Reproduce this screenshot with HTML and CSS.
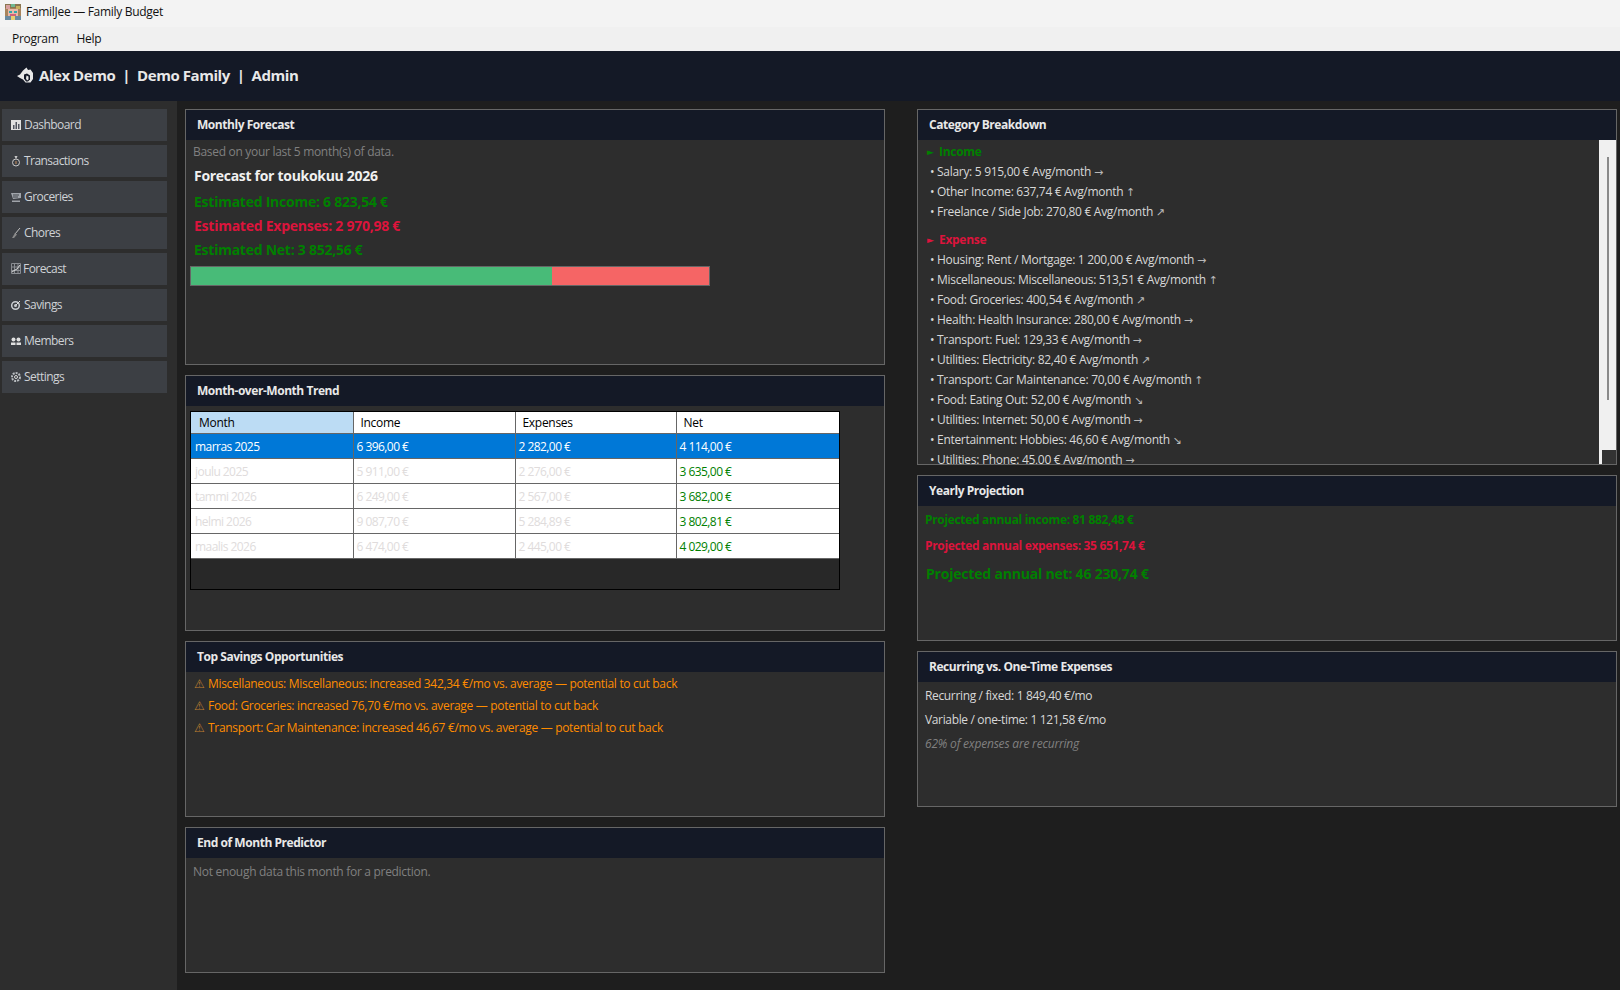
FILE: index.html
```html
<!DOCTYPE html>
<html>
<head>
    <title>FamilJee — Family Budget</title>
    <link rel="stylesheet" href="styles.css">
</head>
<body>
    <div class="titlebar">
        <svg class="app-icon" width="16" height="16" viewBox="0 0 16 16">
            <rect width="16" height="16" fill="#a8845c"/>
            <rect width="16" height="4" fill="#8a7650"/>
            <rect x="1" y="1" width="4" height="4" fill="#d8a0a0"/>
            <rect x="6" y="0" width="4" height="3" fill="#70b890"/>
            <rect x="11" y="2" width="4" height="3" fill="#c8b060"/>
            <rect x="3" y="5" width="10" height="7" fill="#e8b8a8"/>
            <rect x="4" y="7" width="3" height="2" fill="#30a8a8"/>
            <rect x="9" y="7" width="3" height="2" fill="#30a8a8"/>
            <rect x="5" y="10" width="6" height="2" fill="#d0607a"/>
            <rect x="0" y="12" width="16" height="4" fill="#6a8aa0"/>
            <rect x="6" y="12" width="4" height="4" fill="#e8d070"/>
        </svg>
        <span>FamilJee — Family Budget</span>
    </div>
    <div class="menubar">
        <span>Program</span>
        <span>Help</span>
    </div>
    <div class="userbar">
        <svg width="18" height="17" viewBox="0 0 18 17">
            <path d="M1 9l3-1.500 3-4 3.500-3 1.500 2.500 2.500-.5 2.500 3.500v6l-2.500 3.500h-5l-2.500-3-3-1.500z" fill="#e8e8e8"/>
            <path d="M8 7.500l3-1 3 2v4l-2 2h-2l-2-3z" fill="#141926"/>
            <path d="M10.500 8.500l2 1v3l-1.500 1-1-2z" fill="#e8e8e8"/>
        </svg>
        <b>Alex Demo</b><b class="sep">|</b><b>Demo Family</b><b class="sep">|</b><b>Admin</b>
    </div>

    <div class="app">
        <div class="sidebar">
            <div class="nav-btn">
                <svg width="11" height="12" viewBox="0 0 11 12"><rect x="0" y="1" width="10" height="10" fill="#e0e0e0"/><path d="M2 10V6h1.500v4zM4.500 10V3H6v7zM7 10V5h1.500v5z" fill="#505560"/></svg>
                Dashboard
            </div>
            <div class="nav-btn">
                <svg width="11" height="12" viewBox="0 0 11 12"><circle cx="5" cy="7.500" r="3.500" fill="none" stroke="#c8c8c8"/><path d="M3.500 1h3l-1 2.500h-1z" fill="#c8c8c8"/><path d="M5 6v3" stroke="#c89060"/></svg>
                Transactions
            </div>
            <div class="nav-btn">
                <svg width="11" height="12" viewBox="0 0 11 12"><path d="M0 2h10v5l-8 1z" fill="#a0a4aa"/><path d="M2 4h6M2 6h5" stroke="#40444a"/><path d="M1 9.500h8v1.500H1z" fill="#a0a4aa"/></svg>
                Groceries
            </div>
            <div class="nav-btn">
                <svg width="11" height="12" viewBox="0 0 11 12"><path d="M9 1L4 7" stroke="#c0c0c0"/><path d="M4 6l2 1.500-3 3.500H1z" fill="#8a8a8a"/></svg>
                Chores
            </div>
            <div class="nav-btn nav-btn-tight">
                <svg width="11" height="12" viewBox="0 0 11 12"><path d="M.5.500h9v10h-9zM.5 4h9M.5 7.500h9M3.500.500v10M7 .500v10" fill="none" stroke="#8a8d92"/><path d="M1 9l3-2 2-1 3-4" fill="none" stroke="#d8d8d8"/></svg>
                Forecast
            </div>
            <div class="nav-btn">
                <svg width="11" height="12" viewBox="0 0 11 12"><circle cx="4.500" cy="6.500" r="3.800" fill="none" stroke="#c8ccd0" stroke-width="1.500"/><circle cx="4.500" cy="6.500" r="1.500" fill="#c8ccd0"/><path d="M5 6l4-4" stroke="#e0e0e0"/></svg>
                Savings
            </div>
            <div class="nav-btn">
                <svg width="11" height="12" viewBox="0 0 11 12"><circle cx="2.500" cy="4.500" r="2" fill="#e0e0e0"/><circle cx="7.500" cy="4.500" r="2" fill="#e0e0e0"/><path d="M0 10V7.500h4.500V10zM5.500 10V7.500H10V10z" fill="#e0e0e0"/></svg>
                Members
            </div>
            <div class="nav-btn">
                <svg width="11" height="12" viewBox="0 0 11 12"><circle cx="5" cy="6" r="4" fill="none" stroke="#b8bcc0" stroke-width="2" stroke-dasharray="2 1"/><circle cx="5" cy="6" r="1.500" fill="none" stroke="#d8d8d8"/></svg>
                Settings
            </div>
        </div>

        <div class="content">
            <div class="column">
                <div class="panel panel-forecast">
                    <div class="panel-title">Monthly Forecast</div>
                    <div class="panel-body">
                        <div class="muted based">Based on your last 5 month(s) of data.</div>
                        <div class="forecast-head">Forecast for toukokuu 2026</div>
                        <div class="big-line green">Estimated Income: 6 823,54 €</div>
                        <div class="big-line red">Estimated Expenses: 2 970,98 €</div>
                        <div class="big-line green">Estimated Net: 3 852,56 €</div>
                        <div class="split-bar">
                            <div class="split-in"></div>
                            <div class="split-out"></div>
                        </div>
                    </div>
                </div>

                <div class="panel panel-trend">
                    <div class="panel-title">Month-over-Month Trend</div>
                    <div class="table-wrap">
                        <table>
                            <thead>
                                <tr><th class="th-active">Month</th><th>Income</th><th>Expenses</th><th>Net</th></tr>
                            </thead>
                            <tbody>
                                <tr class="selected"><td>marras 2025</td><td>6 396,00 €</td><td>2 282,00 €</td><td>4 114,00 €</td></tr>
                                <tr><td>joulu 2025</td><td>5 911,00 €</td><td>2 276,00 €</td><td class="net">3 635,00 €</td></tr>
                                <tr><td>tammi 2026</td><td>6 249,00 €</td><td>2 567,00 €</td><td class="net">3 682,00 €</td></tr>
                                <tr><td>helmi 2026</td><td>9 087,70 €</td><td>5 284,89 €</td><td class="net">3 802,81 €</td></tr>
                                <tr><td>maalis 2026</td><td>6 474,00 €</td><td>2 445,00 €</td><td class="net">4 029,00 €</td></tr>
                            </tbody>
                        </table>
                    </div>
                </div>

                <div class="panel panel-savings">
                    <div class="panel-title">Top Savings Opportunities</div>
                    <div class="savings-list">
                        <div class="saving"><span class="warn">⚠</span>Miscellaneous: Miscellaneous: increased 342,34 €/mo vs. average — potential to cut back</div>
                        <div class="saving"><span class="warn">⚠</span>Food: Groceries: increased 76,70 €/mo vs. average — potential to cut back</div>
                        <div class="saving"><span class="warn">⚠</span>Transport: Car Maintenance: increased 46,67 €/mo vs. average — potential to cut back</div>
                    </div>
                </div>

                <div class="panel panel-predictor">
                    <div class="panel-title">End of Month Predictor</div>
                    <div class="muted predictor-text">Not enough data this month for a prediction.</div>
                </div>
            </div>

            <div class="column">
                <div class="panel panel-breakdown">
                    <div class="panel-title">Category Breakdown</div>
                    <div class="breakdown-body">
                        <div class="breakdown-list">
                            <div class="cat-head green"><span class="cat-arrow">►</span>Income</div>
                            <div class="cat-row">• Salary: 5 915,00 € Avg/month <span class="trend">→</span></div>
                            <div class="cat-row">• Other Income: 637,74 € Avg/month <span class="trend">↑</span></div>
                            <div class="cat-row">• Freelance / Side Job: 270,80 € Avg/month <span class="trend">↗</span></div>
                            <div class="cat-head red cat-head-gap"><span class="cat-arrow">►</span>Expense</div>
                            <div class="cat-row">• Housing: Rent / Mortgage: 1 200,00 € Avg/month <span class="trend">→</span></div>
                            <div class="cat-row">• Miscellaneous: Miscellaneous: 513,51 € Avg/month <span class="trend">↑</span></div>
                            <div class="cat-row">• Food: Groceries: 400,54 € Avg/month <span class="trend">↗</span></div>
                            <div class="cat-row">• Health: Health Insurance: 280,00 € Avg/month <span class="trend">→</span></div>
                            <div class="cat-row">• Transport: Fuel: 129,33 € Avg/month <span class="trend">→</span></div>
                            <div class="cat-row">• Utilities: Electricity: 82,40 € Avg/month <span class="trend">↗</span></div>
                            <div class="cat-row">• Transport: Car Maintenance: 70,00 € Avg/month <span class="trend">↑</span></div>
                            <div class="cat-row">• Food: Eating Out: 52,00 € Avg/month <span class="trend">↘</span></div>
                            <div class="cat-row">• Utilities: Internet: 50,00 € Avg/month <span class="trend">→</span></div>
                            <div class="cat-row">• Entertainment: Hobbies: 46,60 € Avg/month <span class="trend">↘</span></div>
                            <div class="cat-row">• Utilities: Phone: 45,00 € Avg/month <span class="trend">→</span></div>
                        </div>
                        <div class="scrollbar">
                            <div class="scroll-thumb"></div>
                            <div class="scroll-corner"></div>
                        </div>
                    </div>
                </div>

                <div class="panel panel-yearly">
                    <div class="panel-title">Yearly Projection</div>
                    <div class="yearly-body">
                        <div class="year-line green">Projected annual income: 81 882,48 €</div>
                        <div class="year-line red">Projected annual expenses: 35 651,74 €</div>
                        <div class="year-net green">Projected annual net: 46 230,74 €</div>
                    </div>
                </div>

                <div class="panel panel-recurring">
                    <div class="panel-title">Recurring vs. One-Time Expenses</div>
                    <div class="recurring-body">
                        <div class="rec-line">Recurring / fixed: 1 849,40 €/mo</div>
                        <div class="rec-line">Variable / one-time: 1 121,58 €/mo</div>
                        <div class="rec-line rec-note">62% of expenses are recurring</div>
                    </div>
                </div>
            </div>
        </div>
    </div>
</body>
</html>
```

FILE: styles.css
```css
:root {
    --bg: #1e1e1e;
    --panel: #2d2d2d;
    --head: #141926;
    --fg: #e0e0e0;
    --gray: #808080;
    --green: #008000;
    --red: #dc143c;
    --orange: #ff8c00;
    --line: #666666;
}

* {
    box-sizing: border-box;
}

html, body {
    height: 100%;
}

body {
    margin: 0;
    overflow: hidden;
    background: var(--bg);
    color: var(--fg);
    font-family: "Open Sans", "Noto Sans", sans-serif;
    font-size: 12px;
    letter-spacing: -0.3px;
}

.titlebar {
    display: flex;
    align-items: center;
    gap: 5px;
    height: 27px;
    padding: 0 0 4px 5px;
    background: #f3f3f3;
    color: #111111;
}

.menubar {
    display: flex;
    gap: 18px;
    align-items: center;
    height: 24px;
    padding: 0 0 1px 12px;
    background: #f0f0f0;
    color: #111111;
}

.userbar {
    display: flex;
    align-items: center;
    height: 50px;
    padding: 0 0 2px 16px;
    background: var(--head);
    color: #e8e8e8;
    font-size: 15px;
    letter-spacing: -0.45px;
}

.userbar svg {
    margin-right: 5px;
}

.sep {
    margin: 0 7px;
}

.app {
    display: flex;
    height: 889px;
}

.sidebar {
    display: flex;
    flex-direction: column;
    gap: 4px;
    width: 177px;
    padding: 8px 10px 0 2px;
    background: var(--panel);
}

.nav-btn {
    display: flex;
    align-items: center;
    gap: 2px;
    height: 32px;
    padding: 0 0 1px 9px;
    background: #3c3f44;
    color: #cfd2d6;
    letter-spacing: -0.55px;
}

.nav-btn-tight {
    gap: 1px;
}

.content {
    display: flex;
    gap: 32px;
    padding: 8px 3px 0 8px;
}

.column {
    display: flex;
    flex-direction: column;
    gap: 10px;
    width: 700px;
}

.panel {
    display: flex;
    flex-direction: column;
    border: 1px solid var(--line);
    background: var(--panel);
    flex-shrink: 0;
}

.panel-forecast { height: 256px; }
.panel-trend { height: 256px; }
.panel-savings { height: 176px; }
.panel-predictor { height: 146px; }
.panel-breakdown { height: 356px; }
.panel-yearly { height: 166px; }
.panel-recurring { height: 156px; }

.panel-title {
    height: 30px;
    line-height: 30px;
    padding-left: 11px;
    background: var(--head);
    color: #e8e8e8;
    font-weight: 700;
    letter-spacing: -0.45px;
    flex-shrink: 0;
}

.green { color: var(--green); }
.red { color: var(--red); }
.muted { color: var(--gray); }

.panel-body {
    padding: 1px 4px 0;
}

.based {
    height: 21px;
    line-height: 21px;
    padding-left: 3px;
}

.forecast-head {
    height: 28px;
    line-height: 28px;
    padding-left: 4px;
    font-size: 14px;
    font-weight: 700;
    color: #f0f0f0;
    letter-spacing: -0.3px;
}

.big-line {
    height: 24px;
    line-height: 24px;
    padding-left: 4px;
    font-size: 14px;
    font-weight: 700;
    letter-spacing: -0.25px;
}

.split-bar {
    display: flex;
    width: 520px;
    height: 20px;
    margin-top: 4px;
    border: 1px solid var(--line);
}

.split-in {
    width: 361px;
    background: #48bb78;
}

.split-out {
    flex: 1;
    background: #f56565;
}

.table-wrap {
    width: 650px;
    height: 179px;
    margin: 5px 0 0 4px;
    border: 1px solid #000000;
    background: #282828;
}

table {
    width: 648px;
    border-collapse: collapse;
    table-layout: fixed;
}

th, td {
    padding: 0;
    border-right: 1px solid var(--line);
    border-bottom: 1px solid var(--line);
    background: #ffffff;
    white-space: nowrap;
    overflow: hidden;
    font-weight: 400;
    text-align: left;
}

th {
    height: 21px;
    padding-left: 7px;
    color: #000000;
}

th:nth-child(1), td:nth-child(1) { width: 162px; }
th:nth-child(2), td:nth-child(2) { width: 162px; }
th:nth-child(3), td:nth-child(3) { width: 161px; }

th:last-child, td:last-child {
    border-right: none;
}

.th-active {
    background: #bcdcf4;
    padding-left: 8px;
}

td {
    height: 25px;
    padding: 2px 0 0 3px;
    color: #e0dcdc;
    letter-spacing: -0.55px;
}

td:first-child {
    padding-left: 4px;
}

td.net {
    color: var(--green);
}

.selected td {
    background: #0078d7;
    color: #ffffff;
}

.savings-list {
    padding: 1px 4px 0;
}

.saving {
    height: 22px;
    line-height: 22px;
    padding-left: 4px;
    color: var(--orange);
    letter-spacing: -0.31px;
}

.warn {
    display: inline-block;
    width: 14px;
    font-family: "DejaVu Sans", sans-serif;
    font-size: 12px;
    color: #c08030;
}

.predictor-text {
    padding: 3px 0 0 7px;
    line-height: 22px;
}

.breakdown-body {
    display: flex;
    flex: 1;
    min-height: 0;
}

.breakdown-list {
    flex: 1;
    overflow: hidden;
    padding: 2px 0 0 9px;
}

.cat-row {
    height: 20px;
    line-height: 20px;
    padding-left: 3px;
    color: #d8d8d8;
}

.trend {
    font-family: "DejaVu Sans", sans-serif;
    font-size: 11px;
    color: #b8b8b8;
}

.cat-head {
    height: 20px;
    line-height: 20px;
    font-weight: 700;
}

.cat-head-gap {
    margin-top: 8px;
}

.cat-arrow {
    display: inline-block;
    width: 12px;
    font-family: "DejaVu Sans", sans-serif;
    font-size: 9px;
    vertical-align: 1px;
}

.scrollbar {
    display: flex;
    flex-direction: column;
    width: 17px;
    background: #f0f0f0;
}

.scroll-thumb {
    width: 2px;
    height: 243px;
    margin: 17px 0 0 8px;
    background: #8a8a8a;
}

.scroll-corner {
    width: 14px;
    height: 14px;
    margin: auto 0 0 3px;
    background: #333333;
}

.yearly-body {
    padding: 1px 0 0 7px;
}

.year-line {
    height: 26px;
    line-height: 26px;
    font-size: 12px;
    font-weight: 700;
    letter-spacing: -0.33px;
}

.year-net {
    height: 30px;
    line-height: 30px;
    padding-left: 1px;
    font-size: 14px;
    font-weight: 700;
    letter-spacing: -0.2px;
}

.recurring-body {
    padding: 2px 0 0 7px;
}

.rec-line {
    height: 24px;
    line-height: 24px;
    color: #d8d8d8;
    letter-spacing: -0.35px;
}

.rec-note {
    color: var(--gray);
    font-style: italic;
    letter-spacing: -0.2px;
}
```
